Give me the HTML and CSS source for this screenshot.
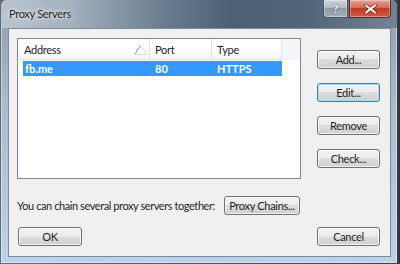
FILE: index.html
```html
<!DOCTYPE html>
<html lang="en">
<head>
  <meta charset="UTF-8" />
  <title>Proxy Servers</title>
  <link rel="stylesheet" href="styles.css">
</head>
<body>
  <div class="window">
    <div class="titlebar">
      <span class="title">Proxy Servers</span>
      <div class="caption-buttons">
        <span class="cap-btn help">?</span>
        <span class="cap-btn close">
          <svg width="13" height="10" viewBox="0 0 13 10">
            <path d="M2 1.5 L11 8.5 M11 1.5 L2 8.5" stroke="#4a1a14" stroke-width="3.4" stroke-linecap="square"/>
            <path d="M2 1.5 L11 8.5 M11 1.5 L2 8.5" stroke="#fff" stroke-width="2" stroke-linecap="square"/>
          </svg>
        </span>
      </div>
    </div>

    <div class="client">
      <div class="top">
        <div class="listview">
          <div class="lv-header">
            <div class="col col-address">Address
              <svg class="sort" width="13" height="10" viewBox="0 0 13 10">
                <path d="M0.5 9.5 L6.5 0.5" stroke="#8a8f96" fill="none"/>
                <path d="M6.5 0.5 L12.5 9.5 L0.5 9.5" stroke="#d8dde3" fill="none"/>
              </svg>
            </div>
            <div class="col">Port</div>
            <div class="col">Type</div>
            <div class="col filler"></div>
          </div>
          <div class="lv-row selected">
            <span class="cell first">fb.me</span>
            <span class="cell">80</span>
            <span class="cell">HTTPS</span>
          </div>
        </div>

        <div class="side-buttons">
          <button class="btn">Add...</button>
          <button class="btn focused">Edit...</button>
          <button class="btn">Remove</button>
          <button class="btn">Check...</button>
        </div>
      </div>

      <div class="chain-row">
        <span class="chain-text">You can chain several proxy servers together:</span>
        <button class="btn chains">Proxy Chains...</button>
      </div>

      <div class="bottom-row">
        <button class="btn ok">OK</button>
        <button class="btn">Cancel</button>
      </div>
    </div>
  </div>
</body>
</html>
```

FILE: styles.css
```css
body {
  margin: 0;
  width: 400px;
  height: 264px;
  overflow: hidden;
  background: linear-gradient(to right, #5d6a78 0, #5d6a78 2px, #3b4149 396px, #2e3339 400px);
  font-family: Lato, "Liberation Sans", sans-serif;
  font-size: 11px;
  letter-spacing: -0.3px;
  color: #1e1e1e;
}
.window {
  margin-left: 1px;
  width: 396px;
  height: 263px;
  box-sizing: border-box;
  padding: 0 6px 6px 7px;
  border-radius: 6px 6px 0 0;
  background: linear-gradient(to bottom, #8e9dab 0, #aabccd 40%, #bcd2e8 100%);
  box-shadow: inset 0 0 0 1px rgba(255, 255, 255, 0.45);
}
.titlebar {
  height: 28px;
  margin: 0 -6px 0 -7px;
  padding-left: 8px;
  display: flex;
  align-items: flex-start;
  justify-content: space-between;
  border-radius: 6px 6px 0 0;
  background: linear-gradient(to right, #b9c4ce 0%, #a3b0bd 18%, #6c7f92 40%, #4c6074 58%, #52667a 78%, #738595 100%);
}
.title {
  margin-top: 7px;
  font-size: 11px;
  color: #1b1b1b;
  text-shadow: 0 0 6px rgba(255, 255, 255, 0.9), 0 0 3px rgba(255, 255, 255, 0.8);
}
.caption-buttons {
  display: flex;
  margin-right: 6px;
  gap: 1px;
}
.cap-btn {
  height: 18px;
  display: flex;
  align-items: center;
  justify-content: center;
  border: 1px solid #4d5560;
  border-top: none;
  box-sizing: border-box;
  box-shadow: inset 0 0 0 1px rgba(255, 255, 255, 0.35);
}
.help {
  width: 25px;
  border-radius: 0 0 0 4px;
  background: linear-gradient(to bottom, #cdd4db 0%, #b3bdc7 45%, #8e9aa7 50%, #a4afba 100%);
  color: #fff;
  font-weight: bold;
  font-size: 11px;
  text-shadow: 0 0 2px #333;
}
.close {
  width: 42px;
  border-color: #5a2a24;
  border-radius: 0 0 4px 0;
  background: linear-gradient(to bottom, #e4a195 0%, #d26b5c 45%, #c03a26 50%, #d55a40 100%);
}
.client {
  height: 229px;
  box-sizing: border-box;
  border: 1px solid #7c8a98;
  background: #f0f0f0;
  padding: 9px 10px 9px 8px;
  display: flex;
  flex-direction: column;
}
.top {
  display: flex;
  align-items: flex-start;
}
.listview {
  width: 284px;
  height: 141px;
  box-sizing: border-box;
  border: 1px solid #828790;
  background: #fff;
}
.lv-header {
  display: grid;
  grid-template-columns: 132px 62px 70px 1fr;
  height: 21px;
  background: linear-gradient(to bottom, #ffffff 0%, #ffffff 50%, #f3f4f6 100%);
  border-bottom: 1px solid #e5e5e5;
  box-sizing: border-box;
}
.col {
  position: relative;
  padding-left: 5px;
  line-height: 21px;
  border-right: 1px solid #dfe2e6;
}
.col-address {
  padding-left: 6px;
}
.col.filler {
  border-right: none;
  background: #f4f5f6;
}
.sort {
  position: absolute;
  right: 2px;
  top: 6px;
}
.lv-row {
  display: grid;
  grid-template-columns: 127px 62px 70px;
  width: 259px;
  margin: 1px 0 0 5px;
  height: 15px;
  line-height: 15px;
  font-weight: bold;
  letter-spacing: 0;
}
.lv-row.selected {
  background: #3399ff;
  color: #fff;
}
.cell {
  padding-left: 5px;
}
.cell.first {
  padding-left: 2px;
}
.side-buttons {
  margin-left: 16px;
  padding-top: 12px;
  display: flex;
  flex-direction: column;
  gap: 14px;
}
.btn {
  width: 63px;
  height: 19px;
  padding: 0;
  font-family: inherit;
  font-size: 11px;
  letter-spacing: -0.3px;
  white-space: nowrap;
  color: #1e1e1e;
  border: 1px solid #707070;
  border-radius: 3px;
  background: linear-gradient(to bottom, #f2f2f2 0%, #ebebeb 50%, #dddddd 50%, #cfcfcf 100%);
  box-shadow: inset 0 0 0 1px rgba(255, 255, 255, 0.7);
}
.btn.focused {
  border-color: #3c7fb1;
  box-shadow: inset 0 0 0 1px #9fe3fb;
}
.chain-row {
  margin-top: 17px;
  display: flex;
  align-items: center;
}
.chain-text {
  width: 207px;
  white-space: nowrap;
  letter-spacing: -0.42px;
}
.btn.chains {
  width: 76px;
}
.bottom-row {
  margin-top: 12px;
  display: flex;
  justify-content: space-between;
}
.btn.ok {
  margin-left: 1px;
  width: 64px;
}
```
